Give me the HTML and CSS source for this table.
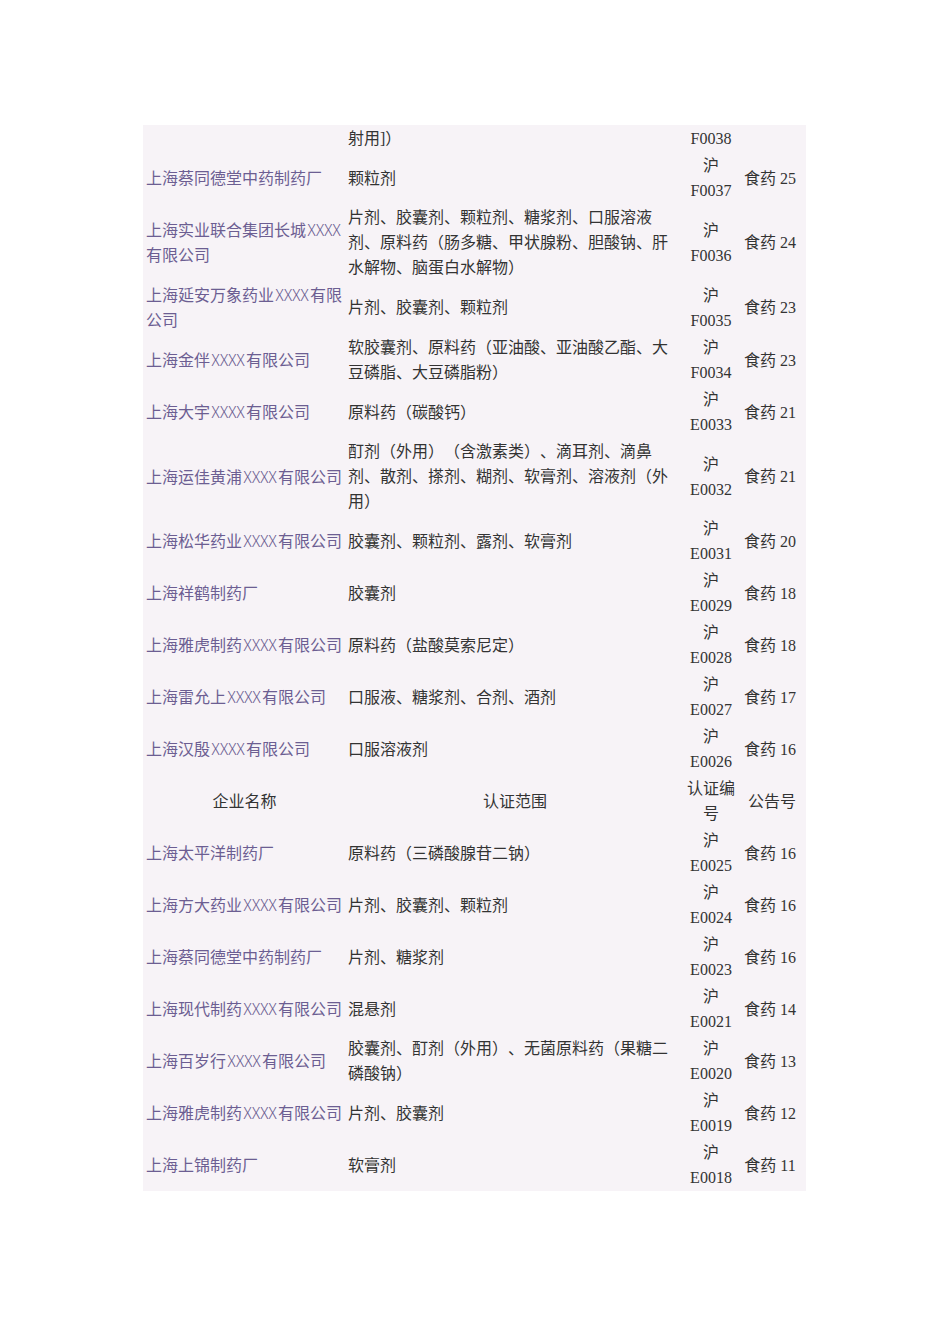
FILE: index.html
```html
<!DOCTYPE html>
<html lang="zh-CN">
<head>
<meta charset="utf-8">
<title>GMP认证企业</title>
<link rel="stylesheet" href="styles.css">
</head>
<body>
<div class="page">
<table class="cert">
<colgroup>
<col class="c-name"><col class="c-scope"><col class="c-code"><col class="c-ann">
</colgroup>
<tbody>
<tr><td class="name"></td><td class="scope">射用]）</td><td class="code">F0038</td><td class="ann"></td></tr>
<tr><td class="name">上海蔡同德堂中药制药厂</td><td class="scope">颗粒剂</td><td class="code">沪 F0037</td><td class="ann">食药 25</td></tr>
<tr><td class="name">上海实业联合集团长城<span class="xx">XXXX</span>有限公司</td><td class="scope">片剂、胶囊剂、颗粒剂、糖浆剂、口服溶液剂、原料药（肠多糖、甲状腺粉、胆酸钠、肝水解物、脑蛋白水解物）</td><td class="code">沪 F0036</td><td class="ann">食药 24</td></tr>
<tr><td class="name">上海延安万象药业<span class="xx">XXXX</span>有限公司</td><td class="scope">片剂、胶囊剂、颗粒剂</td><td class="code">沪 F0035</td><td class="ann">食药 23</td></tr>
<tr><td class="name">上海金伴<span class="xx">XXXX</span>有限公司</td><td class="scope">软胶囊剂、原料药（亚油酸、亚油酸乙酯、大豆磷脂、大豆磷脂粉）</td><td class="code">沪 F0034</td><td class="ann">食药 23</td></tr>
<tr><td class="name">上海大宇<span class="xx">XXXX</span>有限公司</td><td class="scope">原料药（碳酸钙）</td><td class="code">沪 E0033</td><td class="ann">食药 21</td></tr>
<tr><td class="name">上海运佳黄浦<span class="xx">XXXX</span>有限公司</td><td class="scope">酊剂（外用）（含激素类）、滴耳剂、滴鼻剂、散剂、搽剂、糊剂、软膏剂、溶液剂（外用）</td><td class="code">沪 E0032</td><td class="ann">食药 21</td></tr>
<tr><td class="name">上海松华药业<span class="xx">XXXX</span>有限公司</td><td class="scope">胶囊剂、颗粒剂、露剂、软膏剂</td><td class="code">沪 E0031</td><td class="ann">食药 20</td></tr>
<tr><td class="name">上海祥鹤制药厂</td><td class="scope">胶囊剂</td><td class="code">沪 E0029</td><td class="ann">食药 18</td></tr>
<tr><td class="name">上海雅虎制药<span class="xx">XXXX</span>有限公司</td><td class="scope">原料药（盐酸莫索尼定）</td><td class="code">沪 E0028</td><td class="ann">食药 18</td></tr>
<tr><td class="name">上海雷允上<span class="xx">XXXX</span>有限公司</td><td class="scope">口服液、糖浆剂、合剂、酒剂</td><td class="code">沪 E0027</td><td class="ann">食药 17</td></tr>
<tr><td class="name">上海汉殷<span class="xx">XXXX</span>有限公司</td><td class="scope">口服溶液剂</td><td class="code">沪 E0026</td><td class="ann">食药 16</td></tr>
<tr class="head"><td>企业名称</td><td>认证范围</td><td>认证编号</td><td>公告号</td></tr>
<tr><td class="name">上海太平洋制药厂</td><td class="scope">原料药（三磷酸腺苷二钠）</td><td class="code">沪 E0025</td><td class="ann">食药 16</td></tr>
<tr><td class="name">上海方大药业<span class="xx">XXXX</span>有限公司</td><td class="scope">片剂、胶囊剂、颗粒剂</td><td class="code">沪 E0024</td><td class="ann">食药 16</td></tr>
<tr><td class="name">上海蔡同德堂中药制药厂</td><td class="scope">片剂、糖浆剂</td><td class="code">沪 E0023</td><td class="ann">食药 16</td></tr>
<tr><td class="name">上海现代制药<span class="xx">XXXX</span>有限公司</td><td class="scope">混悬剂</td><td class="code">沪 E0021</td><td class="ann">食药 14</td></tr>
<tr><td class="name">上海百岁行<span class="xx">XXXX</span>有限公司</td><td class="scope">胶囊剂、酊剂（外用）、无菌原料药（果糖二磷酸钠）</td><td class="code">沪 E0020</td><td class="ann">食药 13</td></tr>
<tr><td class="name">上海雅虎制药<span class="xx">XXXX</span>有限公司</td><td class="scope">片剂、胶囊剂</td><td class="code">沪 E0019</td><td class="ann">食药 12</td></tr>
<tr><td class="name">上海上锦制药厂</td><td class="scope">软膏剂</td><td class="code">沪 E0018</td><td class="ann">食药 11</td></tr>
</tbody>
</table>
</div>
</body>
</html>
```
FILE: styles.css
```css
html, body {
  margin: 0;
  padding: 0;
  background: #ffffff;
}

.page {
  padding: 125px 0 0 143px;
  font-family: "Liberation Serif", "Noto Sans CJK SC", serif;
  font-size: 16px;
  line-height: 25px;
  color: #333333;
  text-spacing-trim: space-all;
}

.cert {
  border-collapse: collapse;
  table-layout: fixed;
  width: 663px;
  background: #f7f3f7;
}

.c-name { width: 203px; }
.c-scope { width: 338px; }
.c-code { width: 54px; }
.c-ann { width: 68px; }

.cert td {
  padding: 1px 1px 1px 3px;
  vertical-align: middle;
}

.cert .name {
  color: #6c5e92;
  text-align: left;
}

.cert .scope {
  text-align: left;
  padding-left: 2px;
  padding-right: 6px;
}

.cert .code {
  text-align: center;
  padding: 1px 2px;
}

.cert .ann {
  text-align: center;
  padding: 1px 4px 1px 0;
}

.cert .head td {
  text-align: center;
  padding: 1px 2px;
}

.xx {
  display: inline-block;
  width: 36px;
  text-align: center;
  font-family: "Noto Sans CJK SC", sans-serif;
  font-weight: 300;
  letter-spacing: -0.3px;
  white-space: nowrap;
}
```
